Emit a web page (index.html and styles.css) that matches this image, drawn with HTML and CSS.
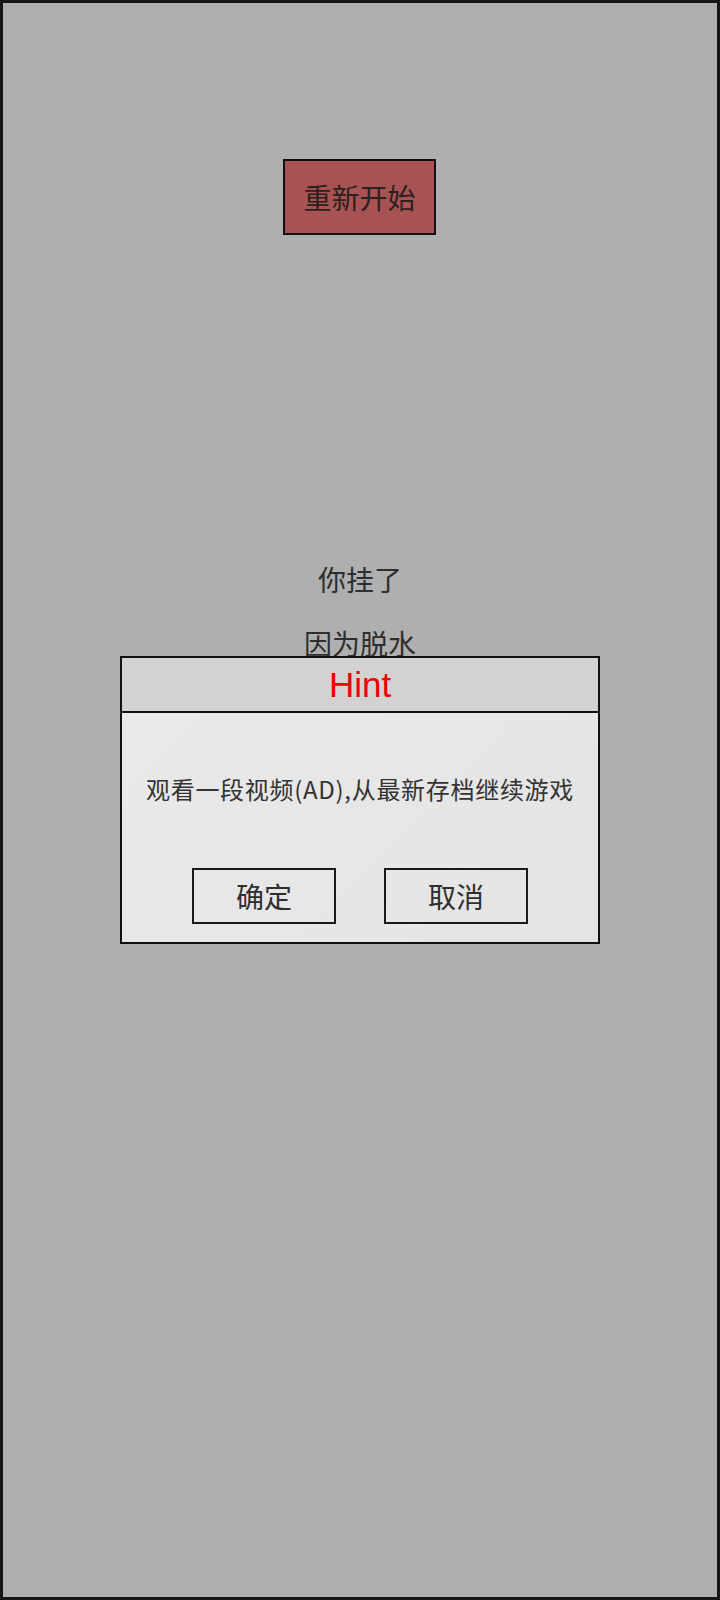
FILE: index.html
```html
<!DOCTYPE html>
<html lang="zh">
<head>
<meta charset="utf-8">
<title>Game Over</title>
<link rel="stylesheet" href="styles.css">
</head>
<body>
<div class="screen">
  <div class="restart">重新开始</div>
  <div class="msg msg-dead">你挂了</div>
  <div class="msg msg-reason">因为脱水</div>

  <div class="dialog">
    <div class="dialog-head">Hint</div>
    <div class="dialog-body">
      <div class="dialog-text">观看一段视频(AD),从最新存档继续游戏</div>
      <div class="dialog-actions">
        <div class="dbtn">确定</div>
        <div class="dbtn">取消</div>
      </div>
    </div>
  </div>
</div>
</body>
</html>
```

FILE: styles.css
```css
html, body {
  margin: 0;
  padding: 0;
}
body {
  width: 720px;
  height: 1600px;
  font-family: "Noto Sans CJK SC", "Noto Sans", sans-serif;
  color: #2e2e2e;
}
.screen {
  position: relative;
  box-sizing: border-box;
  width: 720px;
  height: 1600px;
  border: 3px solid #161616;
  background: #afafaf;
  display: flex;
  flex-direction: column;
  align-items: center;
}
.restart {
  box-sizing: border-box;
  margin-top: 156px;
  margin-left: -1px;
  width: 153px;
  height: 76px;
  border: 2px solid #111;
  background: #a85353;
  color: #2c2020;
  font-size: 28px;
  display: flex;
  align-items: center;
  justify-content: center;
}
.msg {
  font-size: 28px;
  line-height: 40px;
  height: 40px;
}
.msg-dead {
  margin-top: 324px;
}
.msg-reason {
  margin-top: 24px;
}
.dialog {
  position: absolute;
  left: 117px;
  top: 653px;
  box-sizing: border-box;
  width: 480px;
  height: 288px;
  border: 2px solid #111;
  display: flex;
  flex-direction: column;
}
.dialog-head {
  height: 53px;
  border-bottom: 2px solid #111;
  background: #d2d2d2;
  color: #ee0000;
  font-family: "Liberation Sans", Arial, sans-serif;
  font-size: 35px;
  line-height: 53px;
  text-align: center;
}
.dialog-body {
  flex: 1;
  background: linear-gradient(135deg, #e9e9e9, #e4e4e4);
  display: flex;
  flex-direction: column;
  align-items: center;
  padding-top: 59px;
}
.dialog-text {
  font-size: 24px;
  line-height: 34px;
  color: #333;
  letter-spacing: 0.7px;
}
.dialog-actions {
  margin-top: 62px;
  display: flex;
  gap: 48px;
}
.dbtn {
  box-sizing: border-box;
  width: 144px;
  height: 56px;
  border: 2px solid #1a1a1a;
  font-size: 28px;
  color: #2e2e2e;
  display: flex;
  align-items: center;
  justify-content: center;
}
```
